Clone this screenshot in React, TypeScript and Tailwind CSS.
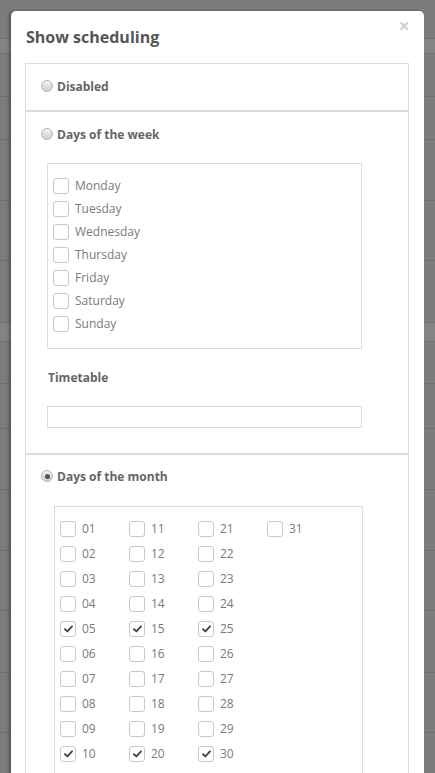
import React from "react";

const weekDays = ["Monday", "Tuesday", "Wednesday", "Thursday", "Friday", "Saturday", "Sunday"];

const monthColumns = [
  ["01", "02", "03", "04", "05", "06", "07", "08", "09", "10"],
  ["11", "12", "13", "14", "15", "16", "17", "18", "19", "20"],
  ["21", "22", "23", "24", "25", "26", "27", "28", "29", "30"],
  ["31"],
];

const checkedDays = ["05", "10", "15", "20", "25", "30"];

// rows of the page behind the overlay
const bgRows = [
  { h: 39, band: false },
  { h: 15, band: true },
  { h: 43, band: false },
  { h: 43, band: false },
  { h: 61, band: false },
  { h: 60, band: false },
  { h: 62, band: false },
  { h: 19, band: true },
  { h: 42, band: false },
  { h: 45, band: false },
  { h: 61, band: false },
  { h: 61, band: false },
  { h: 60, band: false },
  { h: 62, band: false },
  { h: 60, band: false },
];

function Radio({ checked }: { checked?: boolean }) {
  return (
    <span className="relative inline-flex h-[12px] w-[12px] shrink-0 items-center justify-center rounded-full border border-[#b5b5b5] bg-gradient-to-b from-[#f4f4f4] to-[#cfcfcf]">
      {checked && <span className="h-[5px] w-[5px] rounded-full bg-[#555]" />}
    </span>
  );
}

function Checkbox({ checked }: { checked?: boolean }) {
  return (
    <span className="inline-flex h-[16px] w-[16px] shrink-0 items-center justify-center rounded-[3px] border border-[#c8c8c8] bg-white">
      {checked && (
        <svg width="9" height="8" viewBox="0 0 9 8">
          <path d="M1 4.2 L3.4 6.4 L8 1.4" fill="none" stroke="#444" strokeWidth="1.9" strokeLinecap="round" strokeLinejoin="round" />
        </svg>
      )}
    </span>
  );
}

function RadioRow({ label, checked }: { label: string; checked?: boolean }) {
  return (
    <div className="flex h-[20px] items-center gap-[4px]">
      <Radio checked={checked} />
      <span className="pt-[1px] text-[12px] font-bold text-[#666]">{label}</span>
    </div>
  );
}

export default function App() {
  return (
    <div
      className="relative h-[773px] w-full overflow-hidden bg-[#7c7c7c]"
      style={{ fontFamily: '"Open Sans", "Noto Sans", sans-serif' }}
    >
      {/* page behind the modal */}
      <div className="flex flex-col">
        {bgRows.map((r, i) => (
          <div
            key={i}
            className={r.band ? "border-b border-[#707070] bg-[#848484]" : "border-b border-[#707070]"}
            style={{ height: r.h }}
          />
        ))}
      </div>

      {/* modal */}
      <div className="absolute left-[11px] top-[11px] w-[413px] rounded-t-[5px] bg-white shadow-[-2px_0_3px_rgba(0,0,0,0.35)]">
        <div className="relative px-[14px] pt-[13px]">
          <h2 className="pl-[1px] text-[16px] font-bold leading-[26px] text-[#555]">Show scheduling</h2>
          <span className="absolute right-[14px] top-[5px] text-[20px] font-bold leading-[20px] text-[#d0d0d0]">×</span>

          <div className="mt-[13px] w-[384px] border border-b-0 border-[#dcdcdc]">
            {/* disabled */}
            <div className="border-b-2 border-[#dcdcdc] pb-[14px] pl-[15px] pt-[12px]">
              <RadioRow label="Disabled" />
            </div>

            {/* days of the week */}
            <div className="border-b-2 border-[#dcdcdc] pb-[25px] pl-[15px] pt-[12px]">
              <RadioRow label="Days of the week" />
              <div className="ml-[6px] mt-[19px] w-[315px] border border-[#dcdcdc] pb-[13px] pl-[5px] pt-[10px]">
                {weekDays.map((d) => (
                  <div key={d} className="flex h-[23px] items-center gap-[6px]">
                    <Checkbox />
                    <span className="text-[12px] text-[#7a7a7a]">{d}</span>
                  </div>
                ))}
              </div>
              <div className="ml-[7px] mt-[18px] flex h-[20px] items-center pt-[1px] text-[12px] font-bold text-[#666]">
                Timetable
              </div>
              <div className="ml-[6px] mt-[19px] h-[22px] w-[315px] border border-[#dcdcdc] bg-white" />
            </div>

            {/* days of the month */}
            <div className="pb-[20px] pl-[15px] pt-[11px]">
              <RadioRow label="Days of the month" checked />
              <div className="ml-[13px] mt-[20px] flex w-[309px] border border-[#dcdcdc] pb-[14px] pl-[5px] pt-[9px]">
                {monthColumns.map((col, ci) => (
                  <div key={ci} className="flex w-[69px] flex-col">
                    {col.map((n) => (
                      <div key={n} className="flex h-[25px] items-center gap-[6px]">
                        <Checkbox checked={checkedDays.includes(n)} />
                        <span className="text-[12px] text-[#7a7a7a]">{n}</span>
                      </div>
                    ))}
                  </div>
                ))}
              </div>
            </div>
          </div>
        </div>
      </div>
    </div>
  );
}
